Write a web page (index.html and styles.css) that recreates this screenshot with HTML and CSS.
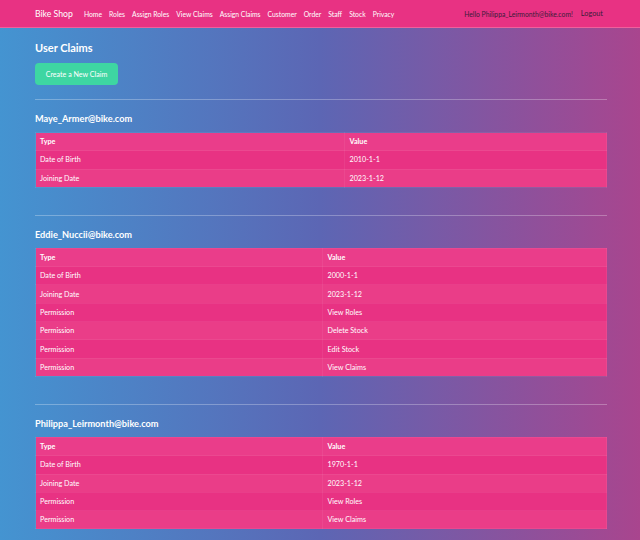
FILE: index.html
```html
<!DOCTYPE html>
<html>
<head>
<meta charset="utf-8">
<link rel="stylesheet" href="styles.css">
</head>
<body>
<nav class="navbar">
  <div class="nav-inner">
    <a class="brand">Bike Shop</a>
    <ul class="nav-links">
      <li>Home</li><li>Roles</li><li>Assign Roles</li><li>View Claims</li><li>Assign Claims</li><li>Customer</li><li>Order</li><li>Staff</li><li>Stock</li><li>Privacy</li>
    </ul>
    <div class="nav-right">
      <span class="hello">Hello Philippa_Leirmonth@bike.com!</span>
      <span class="logout">Logout</span>
    </div>
  </div>
</nav>
<main class="container">
  <h1 class="title">User Claims</h1>
  <button class="btn">Create a New Claim</button>

  <section class="user">
    <hr>
    <h2>Maye_Armer@bike.com</h2>
    <table class="claims wide-type">
      <colgroup><col class="c-type"><col class="c-value"></colgroup>
      <thead><tr><th>Type</th><th>Value</th></tr></thead>
      <tbody>
        <tr><td>Date of Birth</td><td>2010-1-1</td></tr>
        <tr><td>Joining Date</td><td>2023-1-12</td></tr>
      </tbody>
    </table>
  </section>

  <section class="user">
    <hr>
    <h2>Eddie_Nuccii@bike.com</h2>
    <table class="claims">
      <colgroup><col class="c-type"><col class="c-value"></colgroup>
      <thead><tr><th>Type</th><th>Value</th></tr></thead>
      <tbody>
        <tr><td>Date of Birth</td><td>2000-1-1</td></tr>
        <tr><td>Joining Date</td><td>2023-1-12</td></tr>
        <tr><td>Permission</td><td>View Roles</td></tr>
        <tr><td>Permission</td><td>Delete Stock</td></tr>
        <tr><td>Permission</td><td>Edit Stock</td></tr>
        <tr><td>Permission</td><td>View Claims</td></tr>
      </tbody>
    </table>
  </section>

  <section class="user">
    <hr>
    <h2>Philippa_Leirmonth@bike.com</h2>
    <table class="claims">
      <colgroup><col class="c-type"><col class="c-value"></colgroup>
      <thead><tr><th>Type</th><th>Value</th></tr></thead>
      <tbody>
        <tr><td>Date of Birth</td><td>1970-1-1</td></tr>
        <tr><td>Joining Date</td><td>2023-1-12</td></tr>
        <tr><td>Permission</td><td>View Roles</td></tr>
        <tr><td>Permission</td><td>View Claims</td></tr>
      </tbody>
    </table>
  </section>
</main>
</body>
</html>
```
FILE: styles.css
```css
html, body {
  margin: 0;
  padding: 0;
}
body {
  font-family: Lato, "Open Sans", sans-serif;
  color: #fff;
  background: linear-gradient(to right, #4494d1 0%, #5c66b4 50%, #a9458e 100%);
  min-height: 540px;
}
.navbar {
  background: #e83283;
  height: 28px;
  border-bottom: 1px solid #f0609c;
  box-sizing: border-box;
}
.nav-inner {
  display: flex;
  align-items: center;
  height: 100%;
  padding: 0 37px 0 35px;
  box-sizing: border-box;
}
.brand {
  font-size: 8.7px;
  color: #fff;
  margin-right: 11px;
}
.nav-links {
  display: flex;
  gap: 7px;
  list-style: none;
  margin: 0;
  padding: 0;
  font-size: 6.8px;
}
.nav-right {
  margin-left: auto;
  display: flex;
  align-items: center;
  gap: 8px;
  color: #3a1c3a;
}
.hello { font-size: 6.8px; }
.logout { font-size: 7.3px; }
.container {
  padding: 0 33px 0 35px;
}
.title {
  font-size: 11px;
  font-weight: 700;
  margin: 0;
  padding-top: 13px;
  line-height: 14px;
}
.btn {
  display: block;
  margin-top: 8px;
  background: #3ed6a2;
  color: #fff;
  border: none;
  border-radius: 4px;
  height: 22px;
  width: 83px;
  font-family: inherit;
  font-size: 7.1px;
  padding: 0;
}
.user hr {
  border: none;
  border-top: 1px solid rgba(255,255,255,0.28);
  margin: 14px 0 0 0;
}
.user + .user hr {
  margin-top: 27px;
}
.user h2 {
  font-size: 9.2px;
  font-weight: 700;
  margin: 13px 0 0 0;
  line-height: 12px;
}
.claims {
  width: 100%;
  table-layout: fixed;
  border-collapse: collapse;
  margin-top: 7px;
  font-size: 7.2px;
}
.c-type { width: 50.35%; }
.wide-type .c-type { width: 54.2%; }
th, td {
  text-align: left;
  padding: 0 4px;
  height: 17.3px;
  border: 1px solid rgba(255,255,255,0.06);
  white-space: nowrap;
}
th { font-weight: 700; }
thead tr { background: #ea3d8a; }
tbody tr:nth-child(odd) { background: #e83283; }
tbody tr:nth-child(even) { background: #ea3d88; }
```
